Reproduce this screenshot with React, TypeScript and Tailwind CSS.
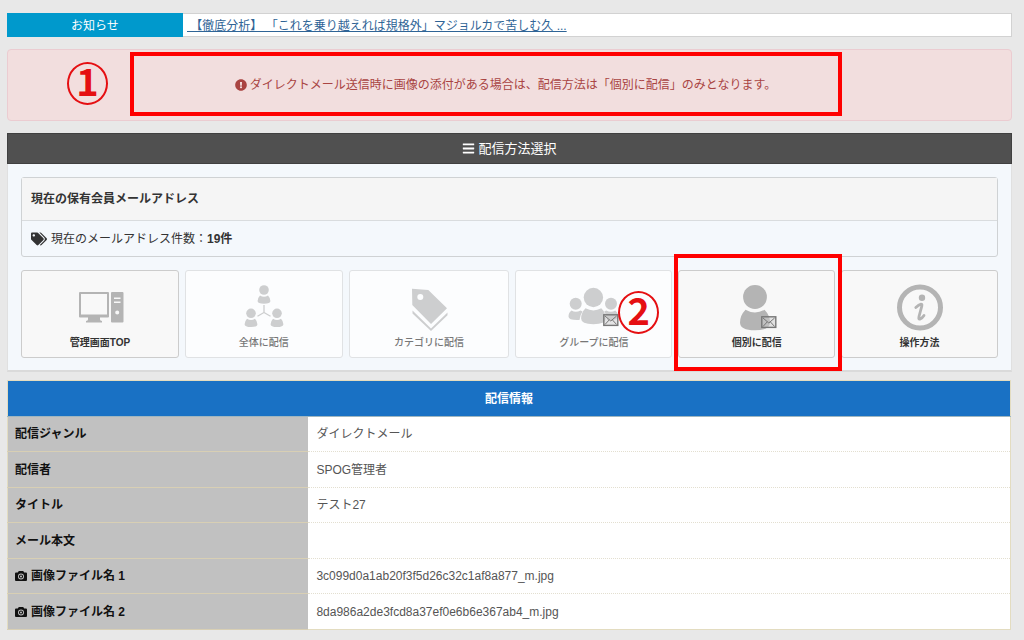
import type { ReactNode } from 'react';
import clsx from 'clsx';
import { FaBars, FaExclamationCircle, FaTags } from 'react-icons/fa';

const FONT = "font-['Liberation_Sans','Noto_Sans_CJK_JP',sans-serif]";

const CameraIcon = () => (
  <svg className="size-3" viewBox="0 0 12 12" fill="currentColor" aria-hidden="true">
    <path
      fillRule="evenodd"
      d="M3.800 1h4.400l1 1.500H11a1 1 0 0 1 1 1V10a1 1 0 0 1-1 1H1a1 1 0 0 1-1-1V3.500a1 1 0 0 1 1-1h1.800ZM6 3.500a3 3 0 1 0 0 6 3 3 0 0 0 0-6Z"
    />
    <path
      fillRule="evenodd"
      d="M6 4.400a2.100 2.100 0 1 1 0 4.200 2.100 2.100 0 0 1 0-4.200Zm0 1.100a1 1 0 1 0 0 2 1 1 0 0 0 0-2Z"
    />
  </svg>
);

const ComputerIcon = () => (
  <svg className="size-12" viewBox="0 0 48 48" fill="currentColor" aria-hidden="true">
    <path
      fillRule="evenodd"
      d="M4 8h28a1 1 0 0 1 1 1v23.500a1 1 0 0 1-1 1H4a1 1 0 0 1-1-1V9a1 1 0 0 1 1-1Zm1 2v20.500h26V10H5Z"
    />
    <path d="M12 33h12v2.500q0 1 2 1.500v1.500H10V37q2-.5 2-1.500Z" />
    <path
      fillRule="evenodd"
      d="M36 8h10.500a1 1 0 0 1 1 1v28.500a1 1 0 0 1-1 1H36a1 1 0 0 1-1-1V9a1 1 0 0 1 1-1Zm2 5.500V15h6.500v-1.500Zm0 4V19h6.500v-1.500Zm3.200 9a2 2 0 1 0 0 4 2 2 0 0 0 0-4Z"
    />
  </svg>
);

const OrganizationIcon = () => (
  <svg className="size-12" viewBox="0 0 48 48" fill="currentColor" aria-hidden="true">
    <g id="org-person">
      <circle cx="24" cy="6" r="4.800" />
      <path d="M20 11.500q4 2.400 8 0 2.400 2.500 2.400 5.500 0 2.800-6.400 2.800T17.600 17q0-3 2.400-5.500Z" />
    </g>
    <use href="#org-person" x="-13" y="23.300" />
    <use href="#org-person" x="13" y="23.300" />
    <path d="M24 21v7.500l-6.500 3.800M24 28.500l6.500 3.800" fill="none" stroke="currentColor" strokeWidth="1.300" />
  </svg>
);

const CategoryIcon = () => (
  <svg className="size-12" viewBox="0 0 48 48" fill="currentColor" aria-hidden="true">
    <path
      fillRule="evenodd"
      d="M7 4.700 23.300 6 42 24.300 26 40 7.300 21ZM15.300 10a3 3 0 1 0 0 6 3 3 0 0 0 0-6Z"
    />
    <path d="M7.500 26.500 26 44.500l16.500-16v2.800L26 47 7.500 29.500Z" />
  </svg>
);

const Envelope = ({ x, y }: { x: number; y: number }) => (
  <g fill="none" stroke="#777" transform={`translate(${x} ${y})`}>
    <rect x=".8" y=".8" width="14" height="10.600" fill="#ccc" fillOpacity=".5" strokeWidth="1.400" />
    <path d="m2 2 5.800 5L13.600 2M2 10.500l4.300-4.700M13.600 10.500 9.300 5.800" strokeWidth="1" />
  </g>
);

const GroupIcon = () => (
  <svg className="h-12 w-[52px]" viewBox="-2 0 52 48" fill="currentColor" aria-hidden="true">
    <circle cx="5.700" cy="19.700" r="6" />
    <circle cx="41" cy="19.700" r="6" />
    <path d="M1.500 26.500q4.200 2.600 9 0l2 1q-2.500 3.500-3 8.500-11 .5-11-3.500 0-4 3-6Z" />
    <path d="M45.200 26.500q-4.200 2.600-9 0l-2 1q2.500 3.500 3 8.500 11 .5 11-3.500 0-4-3-6Z" />
    <circle cx="23.400" cy="13.500" r="9.700" />
    <path d="M15.500 24.300q7.900 4.300 15.800 0 4.400 4.500 4.400 10.300 0 5.700-12.300 5.700T11.100 34.600q0-5.800 4.400-10.300Z" />
    <Envelope x={33} y={30} />
  </svg>
);

const PersonIcon = () => (
  <svg className="size-12" viewBox="0 0 48 48" fill="currentColor" aria-hidden="true">
    <circle cx="22" cy="13" r="11.900" />
    <path d="M12.500 25.800q9.500 5.500 19 0 5.500 5.700 5.500 12.700 0 7.800-15 7.800T7 38.500q0-7 5.500-12.700Z" />
    <Envelope x={28} y={32} />
  </svg>
);

const InfoIcon = () => (
  <svg className="size-12" viewBox="0 0 48 48" fill="none" stroke="currentColor" aria-hidden="true">
    <circle cx="24" cy="23.500" r="20.500" strokeWidth="5" />
    <circle cx="26" cy="13.800" r="3.200" fill="currentColor" stroke="none" />
    <path
      d="M19.800 23.500q3-2.900 5.200-3.400 1.300 0 .8 2L23 32.500q-.8 3.300 1.300 2.400 2-.8 3.700-3.400"
      strokeWidth="2.800"
      strokeLinecap="round"
    />
  </svg>
);

const Marker = ({ children, className }: { children: ReactNode; className: string }) => (
  <span
    className={clsx(
      'absolute z-10 flex h-[43px] w-[41px] items-center justify-center rounded-[50%] border-2 border-[#e50f12] pb-2',
      "font-['Noto_Sans_CJK_JP',sans-serif] text-[38px] leading-none font-bold text-[#e50f12]",
      className
    )}
  >
    {children}
  </span>
);

type Method = {
  label: string;
  icon: ReactNode;
  disabled?: boolean;
  mark?: ReactNode;
};

const METHODS: Method[] = [
  { label: '管理画面TOP', icon: <ComputerIcon /> },
  { label: '全体に配信', icon: <OrganizationIcon />, disabled: true },
  { label: 'カテゴリに配信', icon: <CategoryIcon />, disabled: true },
  {
    label: 'グループに配信',
    icon: <GroupIcon />,
    disabled: true,
    mark: <Marker className="top-[21px] right-[13px]">2</Marker>,
  },
  {
    label: '個別に配信',
    icon: <PersonIcon />,
    mark: (
      <span className="pointer-events-none absolute -top-4 -right-[7px] -bottom-[13px] -left-1 z-10 border-4 border-[#f00]" />
    ),
  },
  { label: '操作方法', icon: <InfoIcon /> },
];

const ROWS = [
  { label: '配信ジャンル', value: 'ダイレクトメール' },
  { label: '配信者', value: 'SPOG管理者' },
  { label: 'タイトル', value: 'テスト27' },
  { label: 'メール本文', value: '' },
  { label: '画像ファイル名 1', value: '3c099d0a1ab20f3f5d26c32c1af8a877_m.jpg', camera: true },
  { label: '画像ファイル名 2', value: '8da986a2de3fcd8a37ef0e6b6e367ab4_m.jpg', camera: true },
];

const MethodButton = ({ label, icon, disabled, mark }: Method) => (
  <div className="relative">
    <button
      type="button"
      disabled={disabled}
      className={clsx(
        'flex w-full flex-col items-center rounded-[3px] border pt-[13px] pb-[3px]',
        disabled ? 'border-[#e0e2e4] bg-[#fcfdfe]' : 'border-[#ccc] bg-[#f8f8f8]'
      )}
    >
      <span className={disabled ? 'text-[#cdcecf]' : 'text-[#b4b4b4]'}>{icon}</span>
      <span
        className={clsx(
          'text-[10px] leading-[22px]',
          disabled ? 'font-medium text-[#777]' : 'font-bold text-[#333]'
        )}
      >
        {label}
      </span>
    </button>
    {mark}
  </div>
);

const App = () => {
  return (
    <main className={clsx('min-h-screen bg-[#e8e8e8] pt-[13px] pr-3 pb-[11px] pl-[7px] text-xs text-[#333]', FONT)}>
      <div className="flex h-6 border border-l-0 border-[#d2d2d2] bg-white leading-6">
        <h2 className="-my-px w-44 shrink-0 bg-[#0099cc] pt-px text-center text-white">お知らせ</h2>
        <a href="#news" className="ml-1 whitespace-pre text-[#2f6496] underline">
          {' 【徹底分析】 「これを乗り越えれば規格外」マジョルカで苦しむ久 ...'}
        </a>
      </div>

      <div
        role="alert"
        className="relative mt-3 flex h-[72px] items-center justify-center gap-[3px] rounded border border-[#ebccd1] bg-[#f2dede] text-[#a94442]"
      >
        <FaExclamationCircle />
        <p className="mr-2">
          ダイレクトメール送信時に画像の添付がある場合は、配信方法は「個別に配信」のみとなります。
        </p>
        <Marker className="top-[12px] left-[59px]">1</Marker>
        <span className="pointer-events-none absolute top-[2px] right-[169px] bottom-1 left-[122px] border-4 border-[#f00]" />
      </div>

      <section className="mt-3">
        <h2 className="flex h-[31px] items-center justify-center gap-[3px] border border-[#404040] bg-[#505050] text-[13px] text-white">
          <FaBars />
          配信方法選択
        </h2>
        <div className="border-x border-b-2 border-x-[#e0e0e0] border-b-[#dadada] bg-[#f4f8fc] px-[13px] pt-[13px] pb-3">
          <div className="rounded-[3px] border border-[#cfd2d4]">
            <h3 className="border-b border-[#d9dcde] bg-[#f5f5f5] px-[9px] py-[11px] leading-5 font-bold">
              現在の保有会員メールアドレス
            </h3>
            <p className="flex items-center px-[9px] pt-2 pb-[7px] leading-5">
              <FaTags className="mr-1 size-4" />
              現在のメールアドレス件数：<b>19件</b>
            </p>
          </div>
          <div className="mt-[13px] grid grid-cols-[158fr_158fr_161fr_157fr_157fr_157fr] gap-1.5">
            {METHODS.map((method) => (
              <MethodButton key={method.label} {...method} />
            ))}
          </div>
        </div>
      </section>

      <div className="mt-2 pr-px">
        <table className="w-full border-collapse border border-[#e3dcc0] bg-white">
          <thead>
            <tr>
              <th colSpan={2} className="h-9 border-b border-[#9fb6c0] bg-[#1971c4] text-center font-bold text-white">
                配信情報
              </th>
            </tr>
          </thead>
          <tbody>
            {ROWS.map(({ label, value, camera }) => (
              <tr key={label} className="h-9 odd:h-[35px]">
                <th scope="row" className="w-[30%] border-b border-[#d8cfb4] bg-[#c1c1c1] px-[7px] text-left font-bold text-[#111]">
                  <span className="flex items-center gap-1">
                    {camera && <CameraIcon />}
                    {label}
                  </span>
                </th>
                <td className="border-b border-dotted border-b-[#e3dfd0] px-2 text-[#555]">{value}</td>
              </tr>
            ))}
          </tbody>
        </table>
      </div>
    </main>
  );
};

export default App;
